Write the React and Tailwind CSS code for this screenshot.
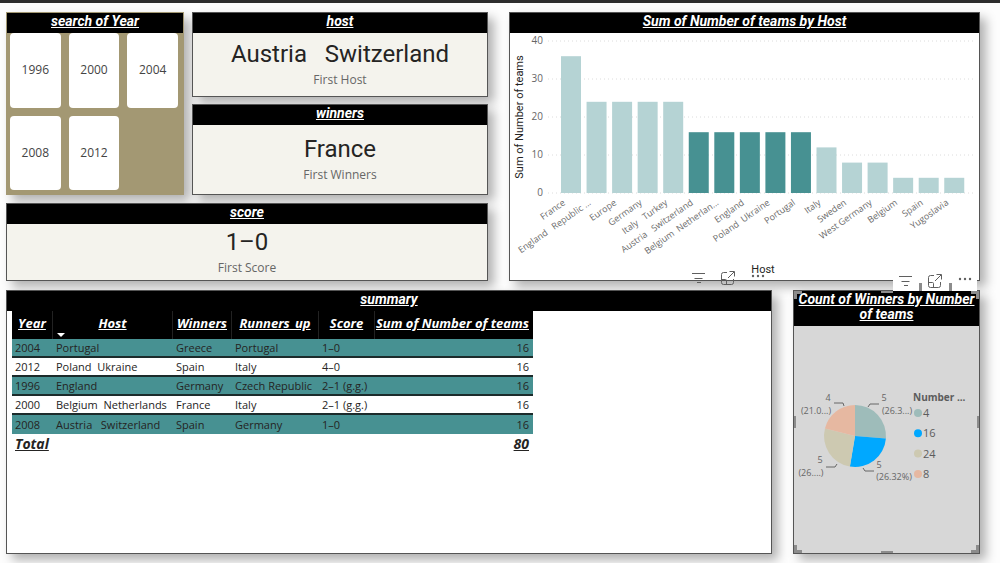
const years = ["1996", "2000", "2004", "2008", "2012"];

const hosts = [
  { name: "France", teams: 36 },
  { name: "England   Republic ...", teams: 24 },
  { name: "Europe", teams: 24 },
  { name: "Germany", teams: 24 },
  { name: "Italy   Turkey", teams: 24 },
  { name: "Austria   Switzerland", teams: 16, active: true },
  { name: "Belgium  Netherlan...", teams: 16, active: true },
  { name: "England", teams: 16, active: true },
  { name: "Poland  Ukraine", teams: 16, active: true },
  { name: "Portugal", teams: 16, active: true },
  { name: "Italy", teams: 12 },
  { name: "Sweden", teams: 8 },
  { name: "West Germany", teams: 8 },
  { name: "Belgium", teams: 4 },
  { name: "Spain", teams: 4 },
  { name: "Yugoslavia", teams: 4 },
];

const columns = ["Year", "Host", "Winners", "Runners_up", "Score"];

const matches = [
  ["2004", "Portugal", "Greece", "Portugal", "1–0", 16],
  ["2012", "Poland  Ukraine", "Spain", "Italy", "4–0", 16],
  ["1996", "England", "Germany", "Czech Republic", "2–1 (g.g.)", 16],
  ["2000", "Belgium  Netherlands", "France", "Italy", "2–1 (g.g.)", 16],
  ["2008", "Austria   Switzerland", "Spain", "Germany", "1–0", 16],
];

const slices = [
  { label: "4", count: 5, color: "#9ebcba" },
  { label: "16", count: 5, color: "#00a8ff" },
  { label: "24", count: 5, color: "#cdc9b1" },
  { label: "8", count: 4, color: "#e6b8a1" },
];

const Panel = ({ title, className = "", children }) => (
  <section
    className={`relative flex flex-col border border-[#555] shadow-[6px_6px_10px_rgba(0,0,0,0.3)] ${className}`}
  >
    <h2 className="bg-black px-1 pt-px pb-1 text-center font-['Roboto',sans-serif] text-sm leading-[15px] font-bold text-white italic underline">
      {title}
    </h2>
    {children}
  </section>
);

const Card = ({ title, value, label, className = "" }) => (
  <Panel title={title} className={`bg-[#f4f3ed] ${className}`}>
    <div className="flex flex-1 flex-col items-center justify-center gap-1 py-1">
      <p className="font-['Roboto',sans-serif] text-2xl leading-7 whitespace-pre text-[#252423]">
        {value}
      </p>
      <p className="text-xs leading-4 text-[#666]">{label}</p>
    </div>
  </Panel>
);

const VisualActions = ({ className = "", children }) => (
  <div
    className={`absolute z-10 flex items-start justify-between text-[#5f5f5f] ${className}`}
  >
    <button type="button" aria-label="Filters">
      <svg className="h-4 w-4" viewBox="0 0 16 16" stroke="currentColor">
        <path d="M2 3.500h13M4.500 8.500h8M7 12.500h4" fill="none" />
      </svg>
    </button>
    {children}
    <button type="button" aria-label="Focus mode">
      <svg
        className="h-4 w-4"
        viewBox="0 0 16 16"
        fill="none"
        stroke="currentColor"
      >
        <path d="M7 2.500H3.500a2 2 0 0 0-2 2v8a2 2 0 0 0 2 2h8a2 2 0 0 0 2-2V9" />
        <path d="M1.500 9.500h4a1 1 0 0 1 1 1v4M8 8l6-6M9.500 1.500h5v5" />
      </svg>
    </button>
    {children}
    <button type="button" aria-label="More options">
      <svg className="h-4 w-4" viewBox="0 0 16 16" fill="currentColor">
        <circle cx="3" cy="6" r="1.200" />
        <circle cx="8" cy="6" r="1.200" />
        <circle cx="13" cy="6" r="1.200" />
      </svg>
    </button>
  </div>
);

const BarChart = () => {
  const y = (v) => 160 - v * 3.8;
  return (
    <svg
      viewBox="0 0 469 247"
      className="w-full"
      role="img"
      aria-label="Sum of Number of teams by Host"
    >
      {[0, 10, 20, 30, 40].map((tick) => (
        <g key={tick}>
          <line
            x1="38"
            x2="465"
            y1={y(tick)}
            y2={y(tick)}
            stroke="#dcdcdc"
            strokeDasharray="1 3"
          />
          <text
            x="33"
            y={y(tick) + 3}
            textAnchor="end"
            className="fill-[#666] text-[10px]"
          >
            {tick}
          </text>
        </g>
      ))}
      {hosts.map((host, i) => {
        const x = 51 + i * 25.55;
        return (
          <g key={i}>
            <rect
              x={x}
              y={y(host.teams)}
              width="20"
              height={host.teams * 3.8}
              fill={host.active ? "#479192" : "#b5d3d4"}
            />
            <text
              transform={`translate(${x + 5} 171) rotate(-35)`}
              textAnchor="end"
              className="fill-[#6b6b6b] text-[9px] whitespace-pre"
            >
              {host.name}
            </text>
          </g>
        );
      })}
      <text
        transform="translate(13 84) rotate(-90)"
        textAnchor="middle"
        className="fill-[#252423] font-['Roboto',sans-serif] text-[11px]"
      >
        Sum of Number of teams
      </text>
      <text
        x="253"
        y="240"
        textAnchor="middle"
        className="fill-[#252423] font-['Roboto',sans-serif] text-[11px]"
      >
        Host
      </text>
    </svg>
  );
};

const PieChart = () => {
  const cx = 61;
  const cy = 110;
  const r = 31;
  const total = slices.reduce((sum, s) => sum + s.count, 0);
  const point = (n) => {
    const a = (n / total) * Math.PI * 2;
    return `${cx + r * Math.sin(a)} ${cy - r * Math.cos(a)}`;
  };
  let start = 0;
  return (
    <svg
      viewBox="0 0 185 226"
      className="w-full"
      role="img"
      aria-label="Count of Winners by Number of teams"
    >
      {slices.map((s) => {
        const from = point(start);
        start += s.count;
        return (
          <path
            key={s.label}
            d={`M${cx} ${cy}L${from}A${r} ${r} 0 0 1 ${point(start)}Z`}
            fill={s.color}
          />
        );
      })}
      <g fill="none" stroke="#666">
        <path d="M74 81l2-3h9M50 80l-1-3h-9M43 138l-2 3H32M69 142l2 3h9" />
      </g>
      <g className="fill-[#666] text-[9px]" textAnchor="middle">
        <text x="34" y="75">4</text>
        <text x="22" y="88">(21.0...)</text>
        <text x="90" y="75">5</text>
        <text x="103" y="88">(26.3...)</text>
        <text x="26" y="137">5</text>
        <text x="17" y="150">(26....)</text>
        <text x="85" y="142">5</text>
        <text x="100" y="154">(26.32%)</text>
      </g>
      <text x="119" y="75" className="fill-[#5c5c5c] text-[10px] font-bold">
        Number ...
      </text>
      {slices.map((s, i) => (
        <g key={s.label}>
          <circle cx="124" cy={87 + i * 20.3} r="4" fill={s.color} />
          <text
            x="129"
            y={91 + i * 20.3}
            className="fill-[#5c5c5c] text-[11px]"
          >
            {s.label}
          </text>
        </g>
      ))}
    </svg>
  );
};

const SelectionHandles = () => (
  <div className="pointer-events-none absolute -inset-px border border-[#555]">
    <span className="absolute top-0 left-0 h-2 w-2 border-t-3 border-l-3 border-[#8c8c8c]" />
    <span className="absolute top-0 right-0 h-2 w-2 border-t-3 border-r-3 border-[#8c8c8c]" />
    <span className="absolute bottom-0 left-0 h-2 w-2 border-b-3 border-l-3 border-[#8c8c8c]" />
    <span className="absolute right-0 bottom-0 h-2 w-2 border-r-3 border-b-3 border-[#8c8c8c]" />
    <span className="absolute inset-x-0 top-0 mx-auto h-0.5 w-3 bg-[#8c8c8c]" />
    <span className="absolute inset-x-0 bottom-0 mx-auto h-0.5 w-3 bg-[#8c8c8c]" />
    <span className="absolute inset-y-0 left-0 my-auto h-3 w-0.5 bg-[#8c8c8c]" />
    <span className="absolute inset-y-0 right-0 my-auto h-3 w-0.5 bg-[#8c8c8c]" />
  </div>
);

const SummaryTable = () => (
  <table className="ml-[5px] w-[521px] table-fixed border-separate border-spacing-0 self-start text-[11px] whitespace-pre text-[#252423]">
    <colgroup>
      <col className="w-[41px]" />
      <col className="w-[120px]" />
      <col className="w-[59px]" />
      <col className="w-[87px]" />
      <col className="w-[56px]" />
      <col />
    </colgroup>
    <thead>
      <tr className="h-7 bg-black text-[13px] leading-4 text-white italic">
        {columns.map((name) => (
          <th
            key={name}
            className="relative border-r border-[#222] p-0 pt-1 align-top font-bold underline"
          >
            {name}
            {name === "Host" && (
              <svg
                className="absolute bottom-0.5 left-1 h-1 w-2 fill-white"
                viewBox="0 0 8 4"
              >
                <path d="M0 0h8L4 4z" />
              </svg>
            )}
          </th>
        ))}
        <th className="p-0 pt-1 pr-1 text-right align-top font-bold underline">
          Sum of Number of teams
        </th>
      </tr>
    </thead>
    <tbody>
      {matches.map((row) => (
        <tr key={row[0]} className="group odd:bg-[#479192]">
          {row.map((cell, i) => (
            <td
              key={i}
              className="h-[19px] border-b-2 border-[#1c2b2b] p-0 px-[3px] leading-4 group-last:border-b-0 last:pr-1 last:text-right"
            >
              {cell}
            </td>
          ))}
        </tr>
      ))}
    </tbody>
    <tfoot>
      <tr className="text-sm leading-5 font-bold italic underline">
        <td className="p-0 px-[3px]">Total</td>
        <td colSpan={5} className="p-0 pr-1 text-right">
          80
        </td>
      </tr>
    </tfoot>
  </table>
);

export default function App() {
  return (
    <div className="flex min-h-screen flex-col border-t-3 border-[#2d2d2d] bg-[#fdfdfd] font-['Open_Sans',sans-serif]">
      <main className="flex flex-1 flex-col gap-[9px] pt-[9px] pr-5 pb-[9px] pl-1.5">
        <div className="grid grid-cols-[482fr_471fr] gap-[21px]">
          <div className="flex flex-col gap-2">
            <div className="grid flex-1 grid-cols-[178fr_296fr] gap-2">
              <Panel
                title="search of Year"
                className="border-[#a39873] bg-[#a39873]"
              >
                <div className="grid flex-1 grid-cols-3 gap-2 pr-[5px] pb-1 pl-[3px]">
                  {years.map((year) => (
                    <button
                      key={year}
                      type="button"
                      className="rounded-sm bg-white text-xs text-[#444]"
                    >
                      {year}
                    </button>
                  ))}
                </div>
              </Panel>
              <div className="flex flex-col gap-[7px]">
                <Card
                  title="host"
                  value="Austria   Switzerland"
                  label="First Host"
                  className="flex-[84]"
                />
                <Card
                  title="winners"
                  value="France"
                  label="First Winners"
                  className="flex-[91]"
                />
              </div>
            </div>
            <Card title="score" value="1–0" label="First Score" />
          </div>
          <Panel title="Sum of Number of teams by Host" className="bg-white">
            <BarChart />
            <VisualActions className="right-[213px] -bottom-1.5 w-[76px]" />
          </Panel>
        </div>

        <div className="grid flex-1 grid-cols-[766fr_187fr] gap-[21px]">
          <Panel title="summary" className="bg-white">
            <SummaryTable />
          </Panel>
          <Panel
            title="Count of Winners by Number of teams"
            className="bg-[#d7d7d7]"
          >
            <PieChart />
            <SelectionHandles />
            <VisualActions className="right-0.5 bottom-full h-[18px] w-[84px] bg-white px-1">
              <span className="h-2 w-[3px] self-end bg-[#8c8c8c]" />
            </VisualActions>
          </Panel>
        </div>
      </main>
    </div>
  );
}
